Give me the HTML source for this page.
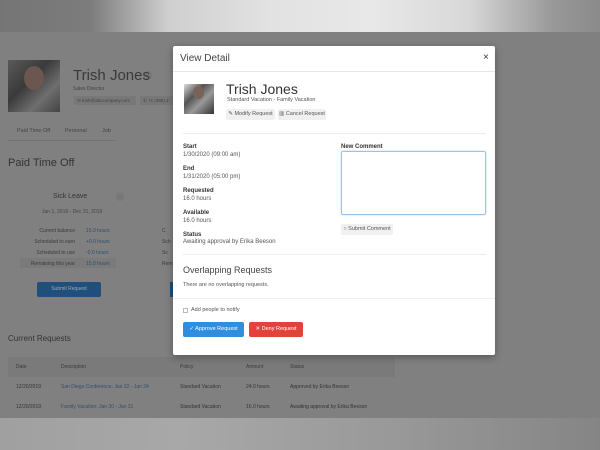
<!DOCTYPE html>
<html><head><meta charset="utf-8"><style>
*{margin:0;padding:0;box-sizing:border-box}
body{width:600px;height:450px;overflow:hidden;position:relative;font-family:"Liberation Sans",sans-serif;background:#808080}
.a{position:absolute;white-space:nowrap}
.top{position:absolute;left:0;top:0;width:600px;height:32px;background:linear-gradient(90deg,#757575 0%,#7c7c7c 15%,#cfcfcf 28%,#e2e2e2 45%,#e8e8e8 62%,#d8d8d8 78%,#999 92%,#8a8a8a 100%)}
.bot{position:absolute;left:0;top:418px;width:600px;height:32px;background:linear-gradient(90deg,#a0a0a0 0%,#a8a8a8 30%,#999 65%,#858585 100%)}
.d{color:#333}.l{color:#2f4f6f}
.modal{position:absolute;left:173px;top:46px;width:322px;height:309px;background:#fff;box-shadow:0 2px 8px rgba(0,0,0,.35);border-radius:2px}
.m{position:absolute;white-space:nowrap;color:#444}
.b{font-weight:bold;font-size:6px;color:#333}
.v{font-size:6px;color:#555}
.btn{position:absolute;white-space:nowrap;background:#f0f0f0;border-radius:2px;font-size:5.5px;color:#555;text-align:center;line-height:11px;height:11px}
</style></head><body>
<div class="top"></div>
<div class="a" style="left:8px;top:60px;width:52px;height:52px;background:linear-gradient(135deg,#5a5a5a,#3a3a3a 40%,#6e6e6e 70%,#444)"></div>
<div class="a" style="left:24px;top:66px;width:20px;height:24px;border-radius:50%;background:#6b5650"></div>
<div class="a" style="left:143px;top:71px;width:9px;height:9px;border-radius:50%;background:#767676"></div>
<div class="a d" style="left:73px;top:67px;font-size:15px;color:#3a3a3a">Trish Jones</div>
<div class="a" style="left:73px;top:86px;font-size:5px;color:#444">Sales Director</div>
<div class="a" style="left:74px;top:96px;width:62px;height:9px;background:#787878;font-size:4.5px;color:#444;padding:2px 3px">✉ trish@abccompany.com</div>
<div class="a" style="left:140px;top:96px;width:34px;height:9px;background:#787878;font-size:4.5px;color:#444;padding:2px 3px">✆ +1 (385) 2</div>
<div class="a" style="left:17px;top:128px;font-size:5.5px;color:#444">Paid Time Off</div>
<div class="a" style="left:65px;top:128px;font-size:5.5px;color:#444">Personal</div>
<div class="a" style="left:102px;top:128px;font-size:5.5px;color:#444">Job</div>
<div class="a" style="left:8px;top:140px;width:108px;height:1px;background:#747474"></div>
<div class="a" style="left:8px;top:157px;font-size:11px;color:#333">Paid Time Off</div>
<div class="a" style="left:53px;top:193px;font-size:7px;color:#333">Sick Leave</div>
<div class="a" style="left:116px;top:193px;width:8px;height:8px;border-radius:50%;background:#777"></div>
<div class="a" style="left:42px;top:209px;font-size:5px;color:#444">Jan 1, 2019 - Dec 31, 2019</div>
<div class="a" style="left:20px;top:258px;width:96px;height:10px;background:#7a7a7a"></div>
<div class="a" style="left:20px;top:226px;width:55px;text-align:right;font-size:5px;color:#3a3a3a;line-height:11px">Current balance<br>Scheduled to earn<br>Scheduled to use<br>Remaining this year</div>
<div class="a" style="left:86px;top:226px;font-size:5px;color:#2f4f6f;line-height:11px">15.0 hours<br>+0.0 hours<br>-0.0 hours<br>15.0 hours</div>
<div class="a" style="left:37px;top:282px;width:64px;height:15px;background:#1f4f7a;border-radius:2px;font-size:5px;color:#9ab;text-align:center;line-height:15px">Submit Request</div>
<div class="a" style="left:162px;top:226px;font-size:5px;color:#3a3a3a;line-height:11px">C<br>Sch<br>Sc<br>Rem</div>
<div class="a" style="left:170px;top:282px;width:4px;height:15px;background:#1f4f7a"></div>
<div class="a" style="left:8px;top:334px;font-size:8px;color:#333">Current Requests</div>
<div class="a" style="left:8px;top:357px;width:387px;height:20px;background:#7a7a7a"></div>
<div class="a" style="left:16px;top:364px;font-size:5px;color:#3a3a3a">Date</div>
<div class="a" style="left:61px;top:364px;font-size:5px;color:#3a3a3a">Description</div>
<div class="a" style="left:180px;top:364px;font-size:5px;color:#3a3a3a">Policy</div>
<div class="a" style="left:246px;top:364px;font-size:5px;color:#3a3a3a">Amount</div>
<div class="a" style="left:290px;top:364px;font-size:5px;color:#3a3a3a">Status</div>
<div class="a" style="left:16px;top:384px;font-size:5px;color:#333">12/20/2019</div>
<div class="a l" style="left:61px;top:384px;font-size:5px">San Diego Conference: Jan 22 - Jan 24</div>
<div class="a" style="left:180px;top:384px;font-size:5px;color:#333">Standard Vacation</div>
<div class="a" style="left:246px;top:384px;font-size:5px;color:#333">24.0 hours</div>
<div class="a" style="left:290px;top:384px;font-size:5px;color:#333">Approved by Erika Beeson</div>
<div class="a" style="left:16px;top:404px;font-size:5px;color:#333">12/20/2019</div>
<div class="a l" style="left:61px;top:404px;font-size:5px">Family Vacation: Jan 30 - Jan 31</div>
<div class="a" style="left:180px;top:404px;font-size:5px;color:#333">Standard Vacation</div>
<div class="a" style="left:246px;top:404px;font-size:5px;color:#333">16.0 hours</div>
<div class="a" style="left:290px;top:404px;font-size:5px;color:#333">Awaiting approval by Erika Beeson</div>
<div class="bot"></div>

<div class="modal">
<div class="m" style="left:7px;top:7px;font-size:10px;color:#444">View Detail</div>
<div class="m" style="left:310px;top:6px;font-size:10px;color:#333">×</div>
<div class="m" style="left:0;top:25px;width:322px;height:1px;background:#e8e8e8"></div>
<div class="m" style="left:11px;top:38px;width:30px;height:30px;background:linear-gradient(135deg,#ddd,#555 35%,#999 60%,#333)"></div>
<div class="m" style="left:20px;top:40px;width:11px;height:13px;border-radius:50%;background:#7a6258"></div>
<div class="m" style="left:53px;top:35px;font-size:14px;color:#333">Trish Jones</div>
<div class="m" style="left:54px;top:51px;font-size:5.5px;color:#555">Standard Vacation - Family Vacation</div>
<div class="btn" style="left:53px;top:63px;width:49px">✎ Modify Request</div>
<div class="btn" style="left:105px;top:63px;width:48px">▥ Cancel Request</div>
<div class="m" style="left:10px;top:87px;width:303px;height:1px;background:#eee"></div>
<div class="m b" style="left:10px;top:98px">Start</div>
<div class="m v" style="left:10px;top:106px">1/30/2020 (09:00 am)</div>
<div class="m b" style="left:10px;top:120px">End</div>
<div class="m v" style="left:10px;top:128px">1/31/2020 (05:00 pm)</div>
<div class="m b" style="left:10px;top:142px">Requested</div>
<div class="m v" style="left:10px;top:150px">16.0 hours</div>
<div class="m b" style="left:10px;top:164px">Available</div>
<div class="m v" style="left:10px;top:172px">16.0 hours</div>
<div class="m b" style="left:10px;top:186px">Status</div>
<div class="m v" style="left:10px;top:193px">Awaiting approval by Erika Beeson</div>
<div class="m b" style="left:168px;top:98px">New Comment</div>
<div class="m" style="left:168px;top:105px;width:145px;height:64px;border:1px solid #9cc3e6;border-radius:2px;box-shadow:0 0 2px #bcd8f0"></div>
<div class="btn" style="left:168px;top:178px;width:52px">○ Submit Comment</div>
<div class="m" style="left:10px;top:208px;width:303px;height:1px;background:#eee"></div>
<div class="m" style="left:10px;top:219px;font-size:9px;color:#444">Overlapping Requests</div>
<div class="m" style="left:10px;top:236px;font-size:5.5px;color:#555">There are no overlapping requests.</div>
<div class="m" style="left:0;top:252px;width:322px;height:1px;background:#f0f0f0"></div>
<div class="m" style="left:10px;top:262px;width:5px;height:5px;border:1px solid #bbb"></div>
<div class="m" style="left:18px;top:261px;font-size:5.5px;color:#555">Add people to notify</div>
<div class="m" style="left:10px;top:276px;width:61px;height:15px;background:#2f8fde;border-radius:2px;color:#fff;font-size:5.5px;text-align:center;line-height:15px">✓ Approve Request</div>
<div class="m" style="left:76px;top:276px;width:54px;height:15px;background:#e2423a;border-radius:2px;color:#fff;font-size:5.5px;text-align:center;line-height:15px">✕ Deny Request</div>
</div>
</body></html>
